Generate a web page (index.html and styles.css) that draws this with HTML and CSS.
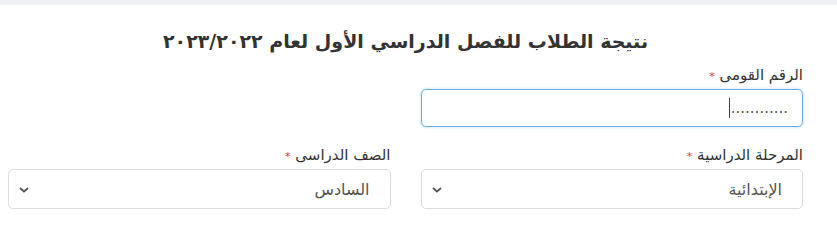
FILE: index.html
```html
<!DOCTYPE html>
<html lang="ar" dir="rtl">
<head>
<meta charset="utf-8">
<title>نتيجة الطلاب</title>
<link rel="stylesheet" href="styles.css">
</head>
<body>
<div class="topbar"></div>
<main class="page">
  <h1 class="title">نتيجة الطلاب للفصل الدراسي الأول لعام ٢٠٢٣/٢٠٢٢</h1>
  <form class="form">
    <div class="field">
      <label class="label">الرقم القومى <span class="req">*</span></label>
      <div class="control focused"><span class="value">............</span><span class="caret"></span></div>
    </div>
    <div class="field"></div>
    <div class="field">
      <label class="label">المرحلة الدراسية <span class="req">*</span></label>
      <div class="control select"><span class="value">الإبتدائية</span>
        <svg class="chev" width="10" height="6" viewBox="0 0 10 6"><path d="M1 1l4 3.5L9 1" fill="none" stroke="#555" stroke-width="1.8"/></svg>
      </div>
    </div>
    <div class="field">
      <label class="label">الصف الدراسى <span class="req">*</span></label>
      <div class="control select"><span class="value">السادس</span>
        <svg class="chev" width="10" height="6" viewBox="0 0 10 6"><path d="M1 1l4 3.5L9 1" fill="none" stroke="#555" stroke-width="1.8"/></svg>
      </div>
    </div>
  </form>
</main>
</body>
</html>
```

FILE: styles.css
```css
html, body {
  margin: 0;
  padding: 0;
  background: #fff;
}
body {
  font-family: "DejaVu Sans", sans-serif;
  color: #333;
  direction: rtl;
}
.topbar {
  height: 5px;
  background: #eeeff3;
}
.page {
  width: 795px;
  margin-right: 34px;
}
.title {
  margin: 21px 0 9px;
  text-align: center;
  font-size: 19px;
  font-weight: bold;
  line-height: 30px;
  color: #333;
}
.form {
  display: grid;
  grid-template-columns: 1fr 1fr;
  column-gap: 30px;
  row-gap: 18px;
}
.field {
  display: flex;
  flex-direction: column;
}
.label {
  font-size: 15px;
  line-height: 20px;
  color: #333;
  margin-bottom: 2px;
}
.req {
  color: #e53935;
  font-size: 11px;
}
.control {
  position: relative;
  height: 38px;
  border: 1px solid #ddd;
  border-radius: 5px;
  box-sizing: border-box;
  display: flex;
  align-items: center;
  padding: 0 20px;
  font-size: 16px;
  color: #555;
}
.control.focused {
  border-color: #66afe9;
  box-shadow: 0 0 3px rgba(102, 175, 233, 0.5);
  padding-right: 14px;
  font-size: 15px;
}
.caret {
  width: 1px;
  height: 20px;
  background: #444;
  margin-right: 1px;
}
.select {
  height: 40px;
  padding-right: 20px;
}
.chev {
  position: absolute;
  left: 10px;
  top: 17px;
}
```
